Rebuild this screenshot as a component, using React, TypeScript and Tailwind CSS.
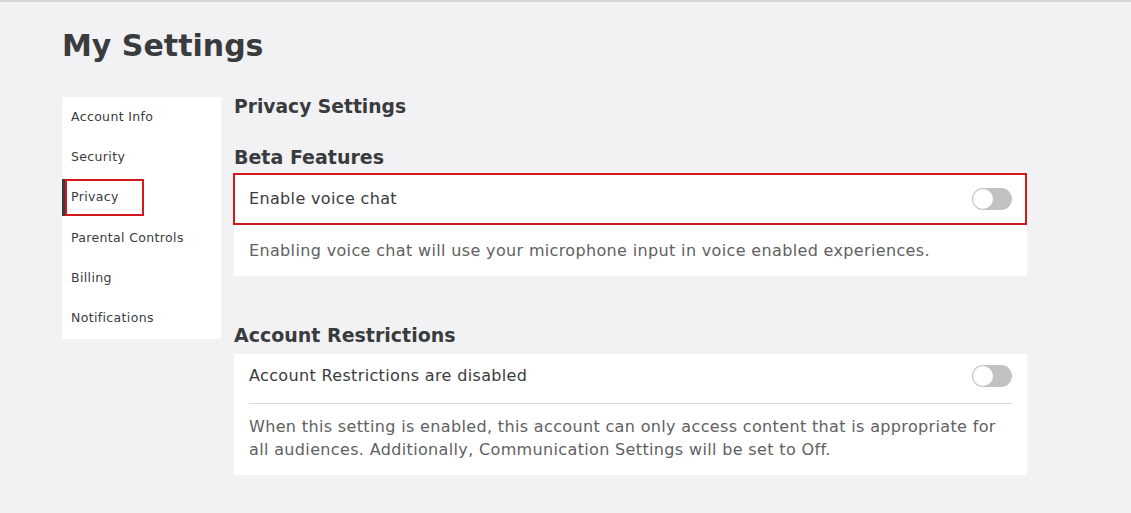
import React from "react";

const font = { fontFamily: '"DejaVu Sans", "Open Sans", sans-serif' };

function Toggle() {
  return (
    <div className="w-[40px] h-[22px] rounded-full bg-[#c2c2c2] relative shrink-0">
      <div className="absolute left-[1px] top-[1px] w-[20px] h-[20px] rounded-full bg-white" />
    </div>
  );
}

const navItems = ["Account Info", "Security", "Privacy", "Parental Controls", "Billing", "Notifications"];

export default function App() {
  return (
    <div className="w-[1131px] h-[513px] bg-[#f2f2f5] border-t-2 border-[#d6d6d6] text-[#393b3d] overflow-hidden" style={font}>
      <div className="pl-[62px] pt-[24px]">
        <h1 className="text-[30px] font-bold leading-[40px]">My Settings</h1>
        <div className="flex mt-[31px]">
          <div className="w-[159px] h-[242px] bg-white shrink-0">
            {navItems.map((item) => (
              <div key={item} className="h-[40.3px] flex items-center relative">
                {item === "Privacy" && (
                  <>
                    <div className="absolute left-0 top-[1px] w-[3px] h-[37px] bg-[#393b3d]" />
                    <div className="absolute left-[3px] top-[1px] w-[79px] h-[37px] border-2 border-[#d3181e]" />
                  </>
                )}
                <span className="pl-[9px] text-[12.5px] tracking-[0.35px] text-[#393b3d]">{item}</span>
              </div>
            ))}
          </div>
          <div className="ml-[13px] w-[793px] text-[16px] tracking-[0.35px]">
            <h2 className="text-[18.7px] font-bold leading-[24px] tracking-normal -mt-[2px]">Privacy Settings</h2>
            <h3 className="text-[19px] font-bold leading-[24px] tracking-normal mt-[26px]">Beta Features</h3>
            <div className="bg-white mt-[4px]">
              <div className="h-[52px] border-2 border-[#d3181e] -ml-[1px] flex items-center justify-between pl-[14px] pr-[13px]">
                <span>Enable voice chat</span>
                <Toggle />
              </div>
              <div className="h-[51px] flex items-center pl-[15px] text-[#606162]">
                Enabling voice chat will use your microphone input in voice enabled experiences.
              </div>
            </div>
            <h3 className="text-[19px] font-bold leading-[24px] tracking-normal mt-[47px]">Account Restrictions</h3>
            <div className="bg-white mt-[7px] px-[15px] pt-[10px] pb-[14px]">
              <div className="pb-[15px] flex items-center justify-between border-b border-[#dadada]">
                <span>Account Restrictions are disabled</span>
                <Toggle />
              </div>
              <p className="leading-[23px] text-[#606162] mt-[11px]">
                When this setting is enabled, this account can only access content that is appropriate for all audiences. Additionally, Communication Settings will be set to Off.
              </p>
            </div>
          </div>
        </div>
      </div>
    </div>
  );
}
